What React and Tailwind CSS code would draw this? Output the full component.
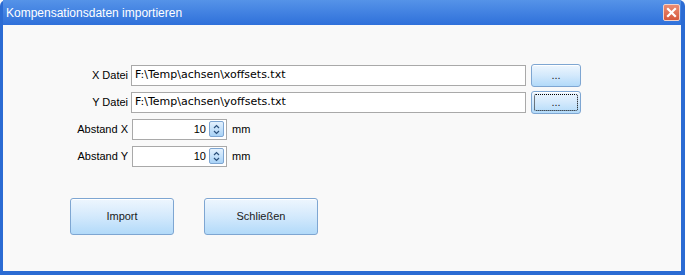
import React from 'react';

const font = { fontFamily: '"Liberation Sans", Arial, sans-serif' };
const fieldFont = { fontFamily: '"DejaVu Sans", Verdana, sans-serif' };

const BlueButton = ({ children, className = '', focused = false }) => (
  <button
    className={`relative flex items-center justify-center rounded-[3px] border border-[#7ea6d2] bg-gradient-to-b from-[#eef6fe] via-[#d3e9fc] to-[#b2daf9] text-[11px] text-[#1a1a1a] shadow-[inset_0_1px_0_#ffffff] ${className}`}
  >
    {focused && (
      <span className="absolute inset-[2px] rounded-[2px] border border-dotted border-black" />
    )}
    <span className="relative">{children}</span>
  </button>
);

const SpinField = ({ value }) => (
  <div className="flex items-center gap-[5px]">
    <div className="flex h-[21px] w-[95px] items-center justify-end border border-[#a9a9a9] bg-white pr-[2px]">
      <span className="mr-[3px] text-[11px] text-black">{value}</span>
      <div className="flex h-[16px] w-[15px] items-center justify-center rounded-[2px] border border-[#7ea6d2] bg-gradient-to-b from-[#e4f1fd] to-[#a8d2f6]">
        <svg width="7" height="11" viewBox="0 0 7 11">
          <path d="M1 4 L3.5 1.5 L6 4" fill="none" stroke="#2a4f7a" strokeWidth="1.2" />
          <path d="M1 7 L3.5 9.5 L6 7" fill="none" stroke="#2a4f7a" strokeWidth="1.2" />
        </svg>
      </div>
    </div>
    <span className="text-[11px] text-black">mm</span>
  </div>
);

const PathField = ({ value }) => (
  <div
    style={fieldFont}
    className="flex h-[21px] w-[395px] items-center border border-[#a9a9a9] bg-white pl-[3px] text-[11px] text-black"
  >
    {value}
  </div>
);

export default function App() {
  return (
    <div style={font} className="w-[685px] h-[275px] bg-[#f9f9f9]">
      <div className="flex h-full w-full flex-col rounded-t-[6px] bg-[#2b6bd3] pb-[4px] pl-[3px] pr-[4px]">
        {/* title bar */}
        <div className="flex h-[25px] items-center justify-between bg-gradient-to-b from-[#5593e8] to-[#2f70da] pl-[3px] pr-[1px]">
          <span className="text-[12px] text-white">Kompensationsdaten importieren</span>
          <div className="flex h-[17px] w-[17px] items-center justify-center rounded-[2px] border border-[#f3d2c8] bg-gradient-to-b from-[#ec8c72] to-[#d5583c]">
            <svg width="11" height="11" viewBox="0 0 11 11">
              <path d="M2 2 L9 9 M9 2 L2 9" stroke="#ffffff" strokeWidth="2.2" strokeLinecap="square" />
            </svg>
          </div>
        </div>

        {/* content */}
        <div className="flex flex-1 flex-col bg-[#f9f9f9] pt-[38px]">
          <div className="grid grid-cols-[125px_auto] items-center gap-x-[3px] gap-y-[3px]">
            <span className="text-right text-[11px] text-black">X Datei</span>
            <div className="flex h-[24px] items-center gap-[5px]">
              <PathField value="F:\Temp\achsen\xoffsets.txt" />
              <BlueButton className="h-[23px] w-[50px]">...</BlueButton>
            </div>

            <span className="text-right text-[11px] text-black">Y Datei</span>
            <div className="flex h-[24px] items-center gap-[5px]">
              <PathField value="F:\Temp\achsen\yoffsets.txt" />
              <BlueButton focused className="h-[23px] w-[50px]">...</BlueButton>
            </div>

            <span className="text-right text-[11px] text-black">Abstand X</span>
            <div className="flex h-[24px] items-center pl-[1px]">
              <SpinField value="10" />
            </div>

            <span className="text-right text-[11px] text-black">Abstand Y</span>
            <div className="flex h-[24px] items-center pl-[1px]">
              <SpinField value="10" />
            </div>
          </div>

          <div className="mt-[30px] flex gap-[30px] pl-[67px]">
            <BlueButton className="h-[37px] w-[104px]">Import</BlueButton>
            <BlueButton className="h-[37px] w-[114px]">Schließen</BlueButton>
          </div>
        </div>
      </div>
    </div>
  );
}
